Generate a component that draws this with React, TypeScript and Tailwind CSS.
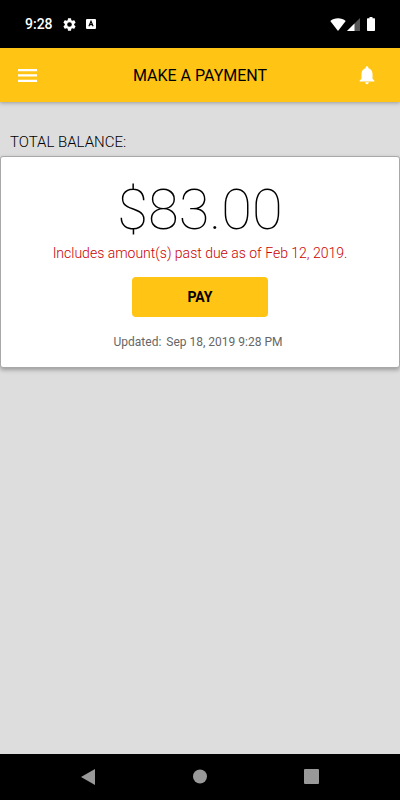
import React from "react";

function StatusBar() {
  return (
    <div className="flex h-12 shrink-0 items-center justify-between bg-black pr-[25px] pl-[25px] text-white">
      <div className="flex items-center">
        <span className="w-[38px] text-sm font-medium">9:28</span>
        <svg className="h-[13px] w-[13px]" viewBox="2 2 20 20" fill="currentColor" aria-hidden="true">
          <path d="M19.14 12.94c.04-.3.06-.61.06-.94 0-.32-.02-.64-.07-.94l2.03-1.58a.49.49 0 0 0 .12-.61l-1.92-3.32a.49.49 0 0 0-.59-.22l-2.39.96c-.5-.38-1.03-.7-1.62-.94l-.36-2.54a.48.48 0 0 0-.48-.41h-3.84c-.24 0-.43.17-.47.41l-.36 2.54c-.59.24-1.13.57-1.62.94l-2.39-.96a.48.48 0 0 0-.59.22L2.74 8.87c-.12.21-.08.47.12.61l2.03 1.58c-.05.3-.09.63-.09.94s.02.64.07.94l-2.03 1.58a.49.49 0 0 0-.12.61l1.92 3.32c.12.22.37.29.59.22l2.39-.96c.5.38 1.03.7 1.62.94l.36 2.54c.05.24.24.41.48.41h3.84c.24 0 .44-.17.47-.41l.36-2.54c.59-.24 1.13-.56 1.62-.94l2.39.96c.22.08.47 0 .59-.22l1.92-3.32a.48.48 0 0 0-.12-.61l-2.01-1.58zM12 15.6A3.6 3.6 0 1 1 12 8.400a3.6 3.600 0 0 1 0 7.200z" />
        </svg>
        <svg className="ml-[10px] h-[10px] w-[10px]" viewBox="0 0 10 10" aria-hidden="true">
          <rect width="10" height="10" rx="1" fill="#fff" />
          <path d="M2.900 7.200 5 2.300l2.100 4.900M3.700 5.700h2.600" fill="none" stroke="#000" strokeWidth="1.200" />
        </svg>
      </div>
      <div className="flex items-center">
        <svg className="h-[13px] w-4" viewBox="0 0 16 13" aria-hidden="true">
          <path d="M8 13 .3 3C2.300 1.200 5 .2 8 .2s5.700 1 7.700 2.800z" fill="#fff" />
        </svg>
        <svg className="ml-px h-[13px] w-[13px]" viewBox="0 0 13 13" aria-hidden="true">
          <path d="M0 13 13 0v13z" fill="#555" />
          <path d="M0 13 7.500 5.500V13z" fill="#fff" />
        </svg>
        <svg className="ml-[7px] h-[14px] w-[8px]" viewBox="0 0 8 14" aria-hidden="true">
          <path d="M2.500 0h3v1.300H7c.6 0 1 .4 1 1V13c0 .6-.4 1-1 1H1c-.6 0-1-.4-1-1V2.300c0-.6.400-1 1-1h1.500z" fill="#fff" />
        </svg>
      </div>
    </div>
  );
}

function Header() {
  return (
    <header className="relative flex h-[54px] shrink-0 items-center justify-between bg-[#ffc414] px-4 text-white shadow-[0_1px_4px_rgba(0,0,0,0.3)]">
      <button type="button" aria-label="Open menu" className="flex h-8 w-[34px] items-center pl-[2px]">
        <svg className="h-[13px] w-[19px]" viewBox="0 0 19 13" fill="currentColor">
          <path d="M0 0h19v2.300H0zM0 5.300h19v2.300H0zM0 10.700h19V13H0z" />
        </svg>
      </button>
      <h1 className="pt-[2px] text-base text-black">MAKE A PAYMENT</h1>
      <button type="button" aria-label="Notifications" className="flex h-8 w-[34px] items-center justify-center">
        <svg className="h-[22px] w-[22px]" viewBox="0 0 24 24" fill="currentColor">
          <path d="M12 22c1.100 0 2-.9 2-2h-4c0 1.100.89 2 2 2zm6-6v-5c0-3.070-1.640-5.640-4.500-6.320V4c0-.83-.67-1.500-1.500-1.500s-1.500.67-1.500 1.500v.68C7.630 5.360 6 7.920 6 11v5l-2 2v1h16v-1l-2-2z" />
        </svg>
      </button>
    </header>
  );
}

function BalanceCard() {
  return (
    <section className="flex flex-col items-center rounded-[3px] border border-[#a8a8a8] bg-white pt-[21px] pb-[15px] shadow-[0_2px_4px_rgba(0,0,0,0.3)]">
      <p className="text-[56px] leading-[64px] font-thin text-black">$83.00</p>
      <p className="text-sm leading-[22px] font-light text-[#cc0000]">Includes amount(s) past due as of Feb 12, 2019.</p>
      <button type="button" className="mt-[13px] h-10 w-[136px] rounded-sm bg-[#ffc414] text-sm font-bold text-black">
        PAY
      </button>
      <p className="mt-[15px] pr-1 text-xs leading-5 text-[#666]">
        Updated:<span className="ml-[5px]">Sep 18, 2019 9:28 PM</span>
      </p>
    </section>
  );
}

function NavigationBar() {
  return (
    <nav className="flex h-[46px] shrink-0 items-center justify-between bg-black px-20 text-[#999]">
      <button type="button" aria-label="Back">
        <svg className="h-4 w-4" viewBox="0 0 16 16" fill="currentColor">
          <path d="M15 0v16L1 8z" />
        </svg>
      </button>
      <button type="button" aria-label="Home">
        <svg className="h-4 w-4" viewBox="0 0 16 16" fill="currentColor">
          <circle cx="8" cy="7.500" r="7" />
        </svg>
      </button>
      <button type="button" aria-label="Recent apps">
        <svg className="h-4 w-4" viewBox="0 0 16 16" fill="currentColor">
          <rect x="0" y="0" width="15" height="15" rx="1" />
        </svg>
      </button>
    </nav>
  );
}

export default function App() {
  return (
    <div className="flex min-h-screen flex-col bg-[#ddd] font-[Roboto,sans-serif]">
      <StatusBar />
      <Header />
      <main className="grow pt-[30px]">
        <h2 className="mb-1 px-[10px] text-[15px] leading-5 font-light text-black">TOTAL BALANCE:</h2>
        <BalanceCard />
      </main>
      <NavigationBar />
    </div>
  );
}
